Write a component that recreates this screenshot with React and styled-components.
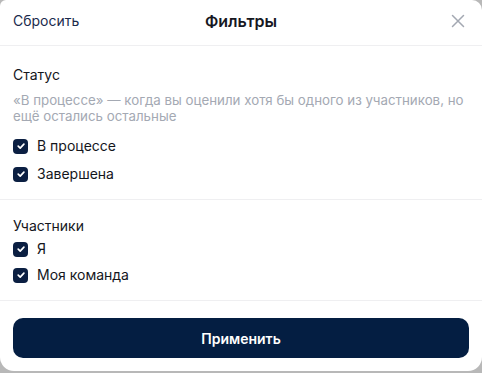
import styled, { createGlobalStyle } from "styled-components"

const GlobalStyle = createGlobalStyle`
html, body {
    margin: 0;
    padding: 0;
    background: #b8b8b8;
}
body {
    font-family: Inter, "Noto Sans", sans-serif;
}
`

const statusItems = ["В процессе", "Завершена"]
const memberItems = ["Я", "Моя команда"]

function CheckIcon() {
    return (
        <svg width="10" height="10" viewBox="0 0 10 10" fill="none">
            <path d="M2.2 5.2 L4.2 7.1 L7.9 3.2" stroke="#fff" strokeWidth="1.7" strokeLinecap="round" strokeLinejoin="round" />
        </svg>
    )
}

function CheckRow({ label }) {
    return (
        <Row>
            <Box><CheckIcon /></Box>
            <span>{label}</span>
        </Row>
    )
}

export default function App() {
    return (
        <>
            <GlobalStyle />
            <Panel>
                <Header>
                    <ResetLink>Сбросить</ResetLink>
                    <Title>Фильтры</Title>
                    <CloseBtn>
                        <svg width="14" height="14" viewBox="0 0 14 14">
                            <path d="M1.5 1.5 L12.5 12.5 M12.5 1.5 L1.5 12.5" stroke="#a3a8b2" strokeWidth="1.5" strokeLinecap="round" />
                        </svg>
                    </CloseBtn>
                </Header>
                <Section $pt={20} $pb={16}>
                    <SectionTitle>Статус</SectionTitle>
                    <Hint>«В процессе» — когда вы оценили хотя бы одного из участников, но ещё остались остальные</Hint>
                    <List $gap={10}>
                        {statusItems.map(i => <CheckRow key={i} label={i} />)}
                    </List>
                </Section>
                <Section $pt={17} $pb={16}>
                    <SectionTitle>Участники</SectionTitle>
                    <List $gap={8} $mt={5}>
                        {memberItems.map(i => <CheckRow key={i} label={i} />)}
                    </List>
                </Section>
                <Footer>
                    <ApplyButton>Применить</ApplyButton>
                </Footer>
            </Panel>
        </>
    )
}

const Panel = styled.div`
width: 482px;
height: 371px;
background: #fff;
border-radius: 6px 10px 14px 14px;
overflow: hidden;
display: flex;
flex-direction: column;
color: #14161c;
`

const Header = styled.header`
height: 46px;
box-sizing: border-box;
padding: 0 13px 4px;
border-bottom: 1px solid #efeff1;
display: grid;
grid-template-columns: 1fr auto 1fr;
align-items: center;
`

const ResetLink = styled.button`
justify-self: start;
border: 0;
background: none;
padding: 0;
font: 400 14px Inter, sans-serif;
color: #1a2a4d;
cursor: pointer;
`

const Title = styled.h1`
margin: 0;
font-size: 16px;
font-weight: 600;
color: #16181f;
`

const CloseBtn = styled.button`
justify-self: end;
border: 0;
background: none;
padding: 0;
margin-right: 4px;
display: flex;
cursor: pointer;
`

const Section = styled.section`
padding: ${p => p.$pt}px 13px ${p => p.$pb}px;
border-bottom: 1px solid #efeff1;
`

const SectionTitle = styled.h2`
margin: 0;
font-size: 14px;
font-weight: 400;
line-height: 18px;
color: #14161c;
`

const Hint = styled.p`
margin: 8px 0 0;
font-size: 13.3px;
line-height: 16px;
color: #a4a9b3;
`

const List = styled.div`
display: flex;
flex-direction: column;
gap: ${p => p.$gap}px;
margin-top: ${p => p.$mt ?? 13}px;
`

const Row = styled.label`
display: flex;
align-items: center;
gap: 9px;
font-size: 14px;
line-height: 18px;
color: #14161c;
`

const Box = styled.span`
width: 15px;
height: 15px;
border-radius: 4px;
background: #0b1f42;
display: flex;
align-items: center;
justify-content: center;
`

const Footer = styled.div`
padding: 17px 13px 0;
`

const ApplyButton = styled.button`
width: 100%;
height: 40px;
border: 0;
border-radius: 10px;
background: #041e42;
color: #fff;
font: 600 14px Inter, sans-serif;
cursor: pointer;
`
